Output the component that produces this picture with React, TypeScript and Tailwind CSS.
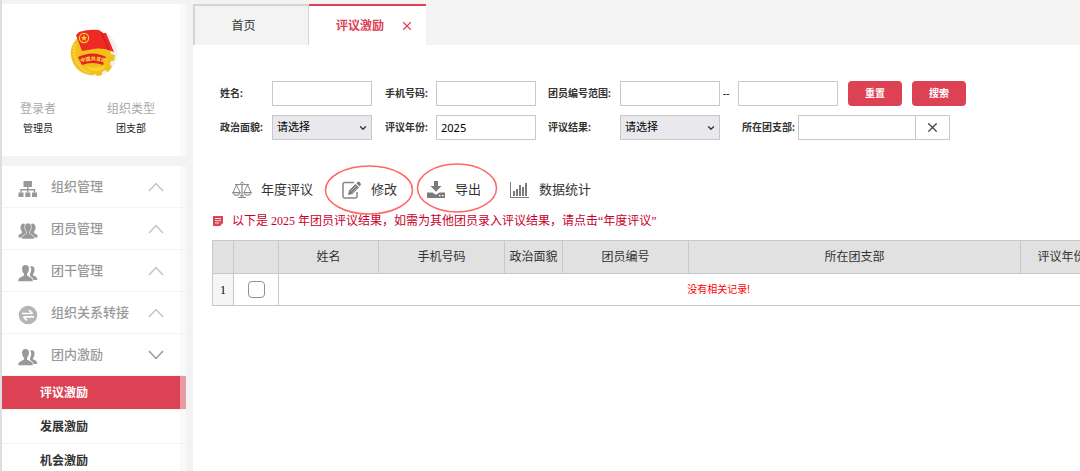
import { useState, type ReactNode } from "react";
import { ChevronDown, X } from "lucide-react";

interface MenuItem {
  label: string;
  icon: ReactNode;
  open?: boolean;
}

interface Column {
  label: string;
  width: string;
}

const Emblem = () => (
  <svg width="48" height="48" viewBox="0 0 48 48" aria-label="团徽">
    <circle cx="24" cy="24" r="23.5" fill="#f1f1f2" />
    <path
      d="M9 8C3 13 0 19 1 27C3 39 12 46 23 46l3-1 1 2 5-1v-3l3-2 3 2 4-5-2-3 1-3h3l1-6-4-1-1-5z"
      fill="#f3c01a"
    />
    <path d="M5 15C2 26 7 38 19 44" stroke="#f9d145" strokeWidth="3" strokeDasharray="2 1" fill="none" />
    <path d="M15 37q11 4 21-1q-3 6-10 6t-11-5z" fill="#ffd83c" opacity=".7" />
    <path d="M6 6l3-3q9-3 20-2l4 3h3l8 19-9-3q-8-1-12 0t-11 2z" fill="#ed2a25" />
    <path d="M31 3l8 18" stroke="#c9151b" strokeWidth="1" />
    <circle cx="14" cy="9" r="4.6" fill="none" stroke="#fbd42e" strokeWidth="1.2" />
    <path d="M14 5.6l.9 2.3 2.4.1-1.9 1.5.7 2.4-2.1-1.4-2.1 1.4.7-2.4-1.9-1.5 2.4-.1z" fill="#fbd42e" />
    <path id="ribbon" d="M10 34q13-5 26 0" fill="none" />
    <path d="M8 28q15-7 28 0l-3 8q-11-4-21 0z" fill="#e4251f" />
    <text fontSize="5" fontWeight="700" fill="#fde04a" fontFamily="Noto Sans CJK SC">
      <textPath href="#ribbon" startOffset="1">
        中国共青团
      </textPath>
    </text>
  </svg>
);

const OrgIcon = () => (
  <svg width="20" height="18" viewBox="0 0 20 18" fill="#999">
    <path d="M5.500 1h8.500v6H5.500zM.5 12.500h5V17h-5zM7.300 12.500h5V17h-5zM14 12.500h5V17h-5z" />
    <path d="M9.800 6.500v6M3 12.500V9.700h13.500v2.800" fill="none" stroke="#999" strokeWidth="1.400" />
  </svg>
);

const GroupIcon = () => (
  <svg width="20" height="18" viewBox="0 0 20 18" fill="#999">
    <path d="M5.500 1.500Q2 2 2.500 6q.2 2 1.500 3.500v1.500L.5 13v2.500h5l4-4L7 2zM14.500 1.500q3.500.5 3 4.500-.2 2-1.500 3.500v1.500l3.500 2v2.500h-5l-4-4L13 2z" />
    <path
      d="M10 1Q6.500 1 6.500 5q.2 3 2 4.800v1.600L4.500 14q-1 .6-1 3h13q0-2.400-1-3l-4-2.600V9.800q1.800-1.800 2-4.800 0-4-3.500-4z"
      stroke="#fff"
      strokeWidth=".6"
    />
  </svg>
);

const MembersIcon = () => (
  <svg width="20" height="18" viewBox="0 0 20 18" fill="#999">
    <path d="M12 2.500q5-1.200 4.500 4-.2 2-1.500 3.500v1.200l3 1.500q1.200.7 1.200 3.300h-3.700q-.5-2.600-3.500-4V9.500q1.300-1.500 1.200-4 0-2-1.200-3z" />
    <path d="M7.500 1Q4 1 4 5q.2 3 2 4.800v1.700L1.500 14q-1.300.7-1.300 3.300h14.600q0-2.600-1.300-3.300L9 11.500V9.800Q10.800 8 11 5q0-4-3.500-4z" />
  </svg>
);

const TransferIcon = () => (
  <svg width="20" height="20" viewBox="0 0 20 20">
    <circle cx="10" cy="10" r="9.300" fill="#b5b5b5" />
    <path
      d="M4 8.500h10.500M11 5l3.500 3.500M16 11.800H5.500M9 15.300l-3.500-3.500"
      stroke="#fff"
      strokeWidth="1.700"
      fill="none"
    />
  </svg>
);

const MenuArrow = ({ open }: { open?: boolean }) => (
  <svg width="16" height="10" viewBox="0 0 16 10" fill="none" strokeWidth="1.500">
    {open ? (
      <path d="M1 1l7 7.500L15 1" stroke="#999" />
    ) : (
      <path d="M1 9l7-7.500L15 9" stroke="#c4c4c4" />
    )}
  </svg>
);

const ScaleIcon = () => (
  <svg width="20" height="18" viewBox="0 0 20 18" fill="none" stroke="#8a8a8a">
    <path d="M10 1v14M3 3.500h14M6 16.500h8M8 14.800h4" strokeWidth="1.200" />
    <circle cx="10" cy="2.500" r="1.300" fill="#fff" />
    <path d="M4.500 4L1 11.500h7zM15.500 4L12 11.500h7z" />
    <path d="M.5 11.500q1 3 4 3t4-3zM11.500 11.500q1 3 4 3t4-3z" fill="#ddd" />
  </svg>
);

const EditIcon = () => (
  <svg width="20" height="18" viewBox="0 0 20 18">
    <path
      d="M12 1.500H3q-2 0-2 2V15q0 2 2 2h10q2 0 2-2v-4"
      fill="none"
      stroke="#868686"
      strokeWidth="1.500"
    />
    <path
      d="M6 14l1-4.500L13.500 3l3.500 3.500-6.500 6.500zM14.300 2.200L16 .7q.7-.5 1.400.1l1.200 1.700q.6.700 0 1.400l-.9 1.700z"
      fill="#7b7b7b"
    />
    <path d="M8.500 10.500l5.500-5.500M10 12l5-5" stroke="#ccc" strokeWidth=".7" />
  </svg>
);

const ExportIcon = () => (
  <svg width="20" height="18" viewBox="0 0 20 18" fill="#7b7b7b">
    <path d="M8 0h4v5h3.500L10 10.800 4.500 5H8z" />
    <path d="M1 11.500h5.500l3.500 2.300 3.500-2.300H19V17H1z" />
    <path d="M13 14h1.500v1.300H13zM16 14h1.500v1.300H16z" fill="#fff" />
  </svg>
);

const ChartIcon = () => (
  <svg width="20" height="18" viewBox="0 0 20 18" fill="#7b7b7b">
    <path d="M0 1h1v15h18v1H0z" />
    <path d="M3 10h2v5H3zM6 8h2v7H6zM9 4h2v11H9zM12 6h2v9h-2zM15 2h2v13h-2z" />
  </svg>
);

const NoteIcon = () => (
  <svg width="10" height="10" viewBox="0 0 10 10" className="shrink-0">
    <path d="M0 0h10v7l-3 3H0z" fill="#d94555" />
    <path d="M2 2.500h6M2 4.700h6M2 7h4" stroke="#fff" strokeWidth=".8" />
  </svg>
);

const MENU: MenuItem[] = [
  { label: "组织管理", icon: <OrgIcon /> },
  { label: "团员管理", icon: <GroupIcon /> },
  { label: "团干管理", icon: <MembersIcon /> },
  { label: "组织关系转接", icon: <TransferIcon /> },
  { label: "团内激励", icon: <MembersIcon />, open: true },
];

const SUB_MENU = ["评议激励", "发展激励", "机会激励"];

const COLUMNS: Column[] = [
  { label: "", width: "w-[21px]" },
  { label: "", width: "w-[45px]" },
  { label: "姓名", width: "w-[100px]" },
  { label: "手机号码", width: "w-[126px]" },
  { label: "政治面貌", width: "w-[58px]" },
  { label: "团员编号", width: "w-[126px]" },
  { label: "所在团支部", width: "w-[332px]" },
  { label: "评议年份", width: "w-[82px]" },
  { label: "", width: "w-[56px]" },
];

const LABEL = "text-[10px] font-bold text-[#333] whitespace-nowrap";
const FIELD =
  "h-[25px] w-[100px] border border-[#c8c8c8] bg-white px-1 text-[11px] text-black outline-none";

const SelectField = ({ id }: { id: string }) => (
  <div className="relative w-[100px]">
    <select
      id={id}
      className="block h-[25px] w-full appearance-none border border-[#c8c8c8] bg-[#e9e9ed] px-1 text-[11px] text-black outline-none"
    >
      <option>请选择</option>
    </select>
    <ChevronDown
      size={10}
      strokeWidth={3}
      className="absolute right-1 top-2 text-[#333] pointer-events-none"
    />
  </div>
);

const Sidebar = () => {
  const [active, setActive] = useState("评议激励");

  return (
    <aside className="relative w-[186px] shrink-0 pt-1 border-l-2 border-[#dedede]">
      <div className="bg-white h-[152px] pt-[25px]">
        <div className="pl-[68px]">
          <Emblem />
        </div>
        <dl className="flex gap-[51px] pl-[18px] mt-[22px] text-center">
          <div>
            <dt className="text-[12px] leading-5 text-[#aaa]">登录者</dt>
            <dd className="text-[10px] leading-[18px] text-[#222]">管理员</dd>
          </div>
          <div>
            <dt className="text-[12px] leading-5 text-[#aaa]">组织类型</dt>
            <dd className="text-[10px] leading-[18px] text-[#222]">团支部</dd>
          </div>
        </dl>
      </div>

      <nav className="mt-[10px] bg-white">
        {MENU.map((item) => (
          <button
            key={item.label}
            className="flex items-center w-full h-[42px] pl-4 pr-[22px] border-b border-[#f3f3f3] cursor-pointer"
          >
            <span className="w-[33px] pt-1 shrink-0">{item.icon}</span>
            <span className="flex-1 text-left text-[13px] font-medium text-[#999]">
              {item.label}
            </span>
            <MenuArrow open={item.open} />
          </button>
        ))}
        {SUB_MENU.map((label) => (
          <button
            key={label}
            onClick={() => setActive(label)}
            className={`block w-full h-[34px] pl-[38px] text-left text-[12px] font-bold border-b border-[#f3f3f3] cursor-pointer ${
              active === label ? "bg-[#dc4254] text-white" : "text-[#333]"
            }`}
          >
            {label}
          </button>
        ))}
      </nav>

      {/* Scroll track */}
      <div className="absolute right-0 top-1 bottom-0 w-1.5 bg-[#f4f4f4]/50" />
    </aside>
  );
};

const SearchForm = () => (
  <form
    onSubmit={(e) => e.preventDefault()}
    className="grid grid-cols-[52px_113px_51px_112px_72px_auto] gap-y-[9px] items-center justify-start pl-[27px] pt-9"
  >
    <label htmlFor="name" className={LABEL}>姓名:</label>
    <input id="name" className={FIELD} />
    <label htmlFor="phone" className={LABEL}>手机号码:</label>
    <input id="phone" className={FIELD} />
    <label htmlFor="codeFrom" className={LABEL}>团员编号范围:</label>
    <div className="flex items-center">
      <input id="codeFrom" className={FIELD} />
      <span className="w-[18px] pl-[3px] text-[10px]">--</span>
      <input aria-label="团员编号范围" className={FIELD} />
      <button
        type="reset"
        className="ml-[10px] h-[25px] w-[54px] rounded bg-[#dc4254] text-[10px] font-bold text-white cursor-pointer"
      >
        重置
      </button>
      <button
        type="submit"
        className="ml-[10px] h-[25px] w-[54px] rounded bg-[#dc4254] text-[10px] font-bold text-white cursor-pointer"
      >
        搜索
      </button>
    </div>

    <label htmlFor="politics" className={LABEL}>政治面貌:</label>
    <SelectField id="politics" />
    <label htmlFor="year" className={LABEL}>评议年份:</label>
    <input id="year" defaultValue="2025" className={FIELD} />
    <label htmlFor="result" className={LABEL}>评议结果:</label>
    <div className="flex items-center">
      <SelectField id="result" />
      <label htmlFor="branch" className={`${LABEL} w-14 ml-[22px]`}>所在团支部:</label>
      <input
        id="branch"
        className="h-[25px] w-[118px] border border-[#c8c8c8] bg-white px-1 text-[11px] outline-none"
      />
      <button
        type="button"
        aria-label="清除"
        className="flex items-center justify-center h-[25px] w-[34px] border border-l-0 border-[#c8c8c8] cursor-pointer"
      >
        <X size={15} strokeWidth={2} className="text-[#444]" />
      </button>
    </div>
  </form>
);

interface ToolButtonProps {
  icon: ReactNode;
  label: string;
  children?: ReactNode;
}

const ToolButton = ({ icon, label, children }: ToolButtonProps) => (
  <button className="relative flex items-center gap-[9px] h-5 text-[13px] text-[#333] cursor-pointer">
    {icon}
    <span>{label}</span>
    {children}
  </button>
);

const Toolbar = () => (
  <div className="flex gap-[29px] mt-10 pl-[39px]">
    <ToolButton icon={<ScaleIcon />} label="年度评议" />
    <ToolButton icon={<EditIcon />} label="修改">
      <svg width="90" height="50" className="absolute -left-[18px] -top-[15px] max-w-none pointer-events-none">
        <ellipse cx="45" cy="25" rx="43.500" ry="24" fill="none" stroke="#f66" strokeWidth="1.500" />
      </svg>
    </ToolButton>
    <ToolButton icon={<ExportIcon />} label="导出">
      <svg width="82" height="50" className="absolute -left-[10px] -top-[17px] max-w-none pointer-events-none">
        <ellipse cx="41" cy="25" rx="39.500" ry="24" fill="none" stroke="#f66" strokeWidth="1.500" />
      </svg>
    </ToolButton>
    <ToolButton icon={<ChartIcon />} label="数据统计" />
  </div>
);

const ResultTable = () => (
  <table className="table-fixed w-[946px] mt-[10px] ml-[19px] border-collapse text-center">
    <thead>
      <tr className="h-[33px] bg-[#e1e1e1]">
        {COLUMNS.map((col, i) => (
          <th
            key={i}
            className={`${col.width} border border-[#c8c8c8] p-0 text-[12px] font-normal text-[#333] whitespace-nowrap`}
          >
            {col.label}
          </th>
        ))}
      </tr>
    </thead>
    <tbody>
      <tr className="h-8">
        <td className="border border-[#c8c8c8] bg-[#f5f5f5] p-0 text-[12px] font-['Liberation_Serif',serif]">
          1
        </td>
        <td className="border border-[#c8c8c8] p-0">
          <input
            type="checkbox"
            aria-label="选择"
            className="block mx-auto size-[17px] appearance-none rounded border border-[#8f8f9d] bg-white"
          />
        </td>
        <td colSpan={7} className="border border-[#c8c8c8] p-0 text-[10px] text-[#f00]">
          没有相关记录!
        </td>
      </tr>
    </tbody>
  </table>
);

export default function App() {
  return (
    <div className="flex h-screen overflow-hidden bg-[#f3f3f3] font-['Noto_Sans','Noto_Sans_CJK_SC',sans-serif]">
      <Sidebar />
      <div className="flex flex-col flex-1 min-w-0 ml-[7px] pt-1">
        <div className="flex h-[41px]">
          <button className="w-[116px] pr-4 border-2 border-b-0 border-r border-[#d4d4d4] text-[12px] text-[#333] cursor-pointer">
            首页
          </button>
          <div className="flex items-center w-[117px] pl-[27px] pt-px bg-white border-t-2 border-[#dc4254] text-[#dc4254]">
            <button className="text-[12px] font-bold cursor-pointer">评议激励</button>
            <button aria-label="关闭" className="ml-4 cursor-pointer">
              <X size={14} strokeWidth={2} />
            </button>
          </div>
        </div>

        <main className="flex-1 overflow-hidden bg-white">
          <SearchForm />
          <Toolbar />
          <p className="flex items-center gap-[9px] h-[18px] mt-3 pl-5 text-[12px] text-[#c7002b] whitespace-nowrap font-['Liberation_Serif','Noto_Sans_CJK_SC',serif]">
            <NoteIcon />
            以下是 2025 年团员评议结果，如需为其他团员录入评议结果，请点击“年度评议”
          </p>
          <ResultTable />
        </main>
      </div>
    </div>
  );
}
